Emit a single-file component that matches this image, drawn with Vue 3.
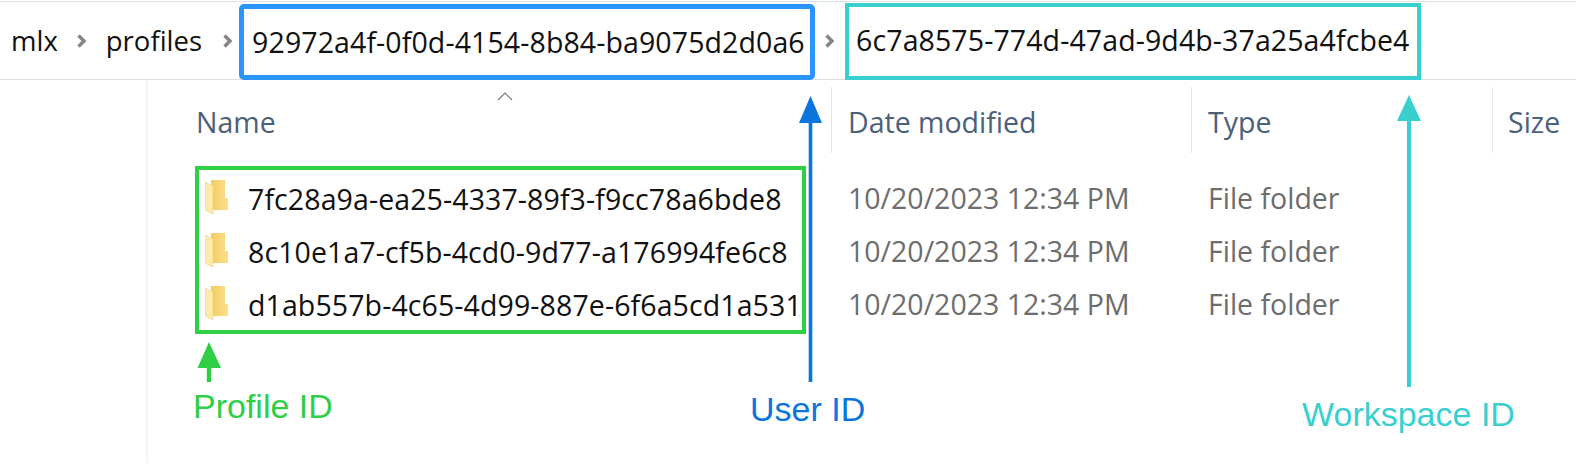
<template>
  <div class="page">
    <div class="crumbs">
      <span class="crumb first">mlx</span>
      <svg class="chev chev-first" viewBox="0 0 10 14"><path d="M2 1.5 L7.5 7 L2 12.5" /></svg>
      <span class="crumb second">profiles</span>
      <svg class="chev" viewBox="0 0 10 14"><path d="M2 1.5 L7.5 7 L2 12.5" /></svg>
      <span class="crumb box-user">92972a4f-0f0d-4154-8b84-ba9075d2d0a6</span>
      <svg class="chev" viewBox="0 0 10 14"><path d="M2 1.5 L7.5 7 L2 12.5" /></svg>
      <span class="crumb box-workspace">6c7a8575-774d-47ad-9d4b-37a25a4fcbe4</span>
    </div>

    <div class="list">
      <div class="head">
        <div class="col col-name">
          <svg class="sort" viewBox="0 0 16 9"><path d="M1 8 L8 1 L15 8" /></svg>
          Name
        </div>
        <div class="col col-date">Date modified</div>
        <div class="col col-type">Type</div>
        <div class="col col-size">Size</div>
      </div>

      <div class="body">
        <div class="names">
          <div v-for="f in folders" :key="f" class="name-row">
            <svg class="folder" viewBox="0 0 23 34">
              <defs>
                <linearGradient id="back" x1="0" x2="1" y1="0" y2="0">
                  <stop offset="0" stop-color="#f3cb62" />
                  <stop offset="1" stop-color="#fbdf8a" />
                </linearGradient>
              </defs>
              <path d="M6 0 H20 V18 H23 V30 H6 Z" fill="url(#back)" />
              <path d="M0 2 L8 6 V34 L0 30 Z" fill="#fde9a8" stroke="#edd07c" stroke-width="0.6" />
            </svg>
            <span class="file-name">{{ f }}</span>
          </div>
        </div>
        <div class="meta">
          <div v-for="f in folders" :key="f" class="meta-row">
            <span class="date">10/20/2023 12:34 PM</span>
            <span>File folder</span>
          </div>
        </div>
      </div>
    </div>

    <svg class="arrow" width="1576" height="464" viewBox="0 0 1576 464">
      <path d="M209 342 L221 368 H211.2 V382 H206.8 V368 H197.5 Z" fill="#2ecf45" />
      <path d="M810.5 96 L822 123 H812.3 V382 H808.7 V123 H799 Z" fill="#0a75dd" />
      <path d="M1409 95 L1421 121 H1411 V387 H1407 V121 H1397 Z" fill="#3acfcf" />
    </svg>
    <span class="label label-profile">Profile ID</span>
    <span class="label label-user">User ID</span>
    <span class="label label-workspace">Workspace ID</span>
  </div>
</template>

<script setup>
const folders = [
  '7fc28a9a-ea25-4337-89f3-f9cc78a6bde8',
  '8c10e1a7-cf5b-4cd0-9d77-a176994fe6c8',
  'd1ab557b-4c65-4d99-887e-6f6a5cd1a531',
]
</script>

<style>
html, body {
  margin: 0;
  background: #fff;
}
</style>

<style scoped>
.page {
  position: relative;
  width: 1576px;
  height: 464px;
  overflow: hidden;
  background: #fff;
  font-family: "Open Sans", "Noto Sans", sans-serif;
  font-size: 28.5px;
}

.crumbs {
  box-sizing: border-box;
  height: 79px;
  margin-top: 1px;
  border-top: 1px solid #e0e0e0;
  border-bottom: 1px solid #dedede;
  display: flex;
  align-items: center;
  color: #111;
}

.crumb {
  white-space: nowrap;
  letter-spacing: 0.1px;
}

.first {
  margin-left: 11px;
  font-size: 27.5px;
  letter-spacing: 0;
}

.second {
  font-size: 27.5px;
  letter-spacing: 0;
}

.chev {
  width: 11px;
  height: 14px;
  margin: 0 21px 0 20px;
  flex: none;
}

.chev-first {
  margin: 0 19px 0 18px;
}

.chev path {
  fill: none;
  stroke: #858585;
  stroke-width: 3.4;
}

.box-user {
  box-sizing: border-box;
  width: 576px;
  height: 76px;
  margin-left: -15px;
  margin-top: 3px;
  padding-left: 8px;
  line-height: 66px;
  border: 5px solid #2a95ff;
  border-radius: 5px;
}

.box-user + .chev {
  margin: 0 10px 0 9px;
}

.box-workspace {
  box-sizing: border-box;
  width: 576px;
  height: 77px;
  margin-top: 1px;
  padding-left: 7px;
  line-height: 67px;
  border: 4px solid #3acfcf;
}

.list {
  margin-left: 146px;
  height: 383px;
  padding-top: 7px;
  box-sizing: border-box;
  border-left: 2px solid #f5f5f5;
}

.head {
  display: flex;
  height: 66px;
  color: #4c607a;
}

.col {
  position: relative;
  box-sizing: border-box;
  padding-top: 16px;
  border-right: 1px solid #e5e5e5;
}

.col-name {
  width: 684px;
  padding-left: 48px;
}

.col-date {
  width: 360px;
  padding-left: 16px;
}

.col-type {
  width: 301px;
  padding-left: 16px;
}

.col-size {
  padding-left: 15px;
  border-right: 0;
}

.sort {
  position: absolute;
  left: 349px;
  top: 5px;
  width: 16px;
  height: 9px;
}

.sort path {
  fill: none;
  stroke: #777;
  stroke-width: 1.2;
}

.body {
  display: flex;
  margin-top: 13px;
  margin-left: 47px;
}

.names {
  box-sizing: border-box;
  width: 611px;
  height: 168px;
  padding: 0 0 0 6px;
  border: 4px solid #2ecf45;
  color: #111;
}

.name-row {
  display: flex;
  align-items: center;
  gap: 20px;
  height: 53px;
  white-space: nowrap;
}

.file-name {
  margin-top: 5px;
  letter-spacing: 0.1px;
}

.meta {
  margin-left: 42px;
  padding-top: 5px;
  color: #6d6d6d;
}

.folder {
  width: 23px;
  height: 34px;
  flex: none;
}

.meta-row {
  display: flex;
  height: 53px;
  align-items: center;
}

.date {
  width: 360px;
}

.arrow {
  position: absolute;
  left: 0;
  top: 0;
  pointer-events: none;
}

.label {
  position: absolute;
  font-family: "Liberation Sans", Arial, sans-serif;
  font-size: 34px;
  line-height: 40px;
  white-space: nowrap;
}

.label-profile {
  left: 193px;
  top: 386px;
  color: #2ecf45;
}

.label-user {
  left: 750px;
  top: 389px;
  color: #0a75dd;
}

.label-workspace {
  left: 1302px;
  top: 394px;
  color: #3acfcf;
}
</style>
